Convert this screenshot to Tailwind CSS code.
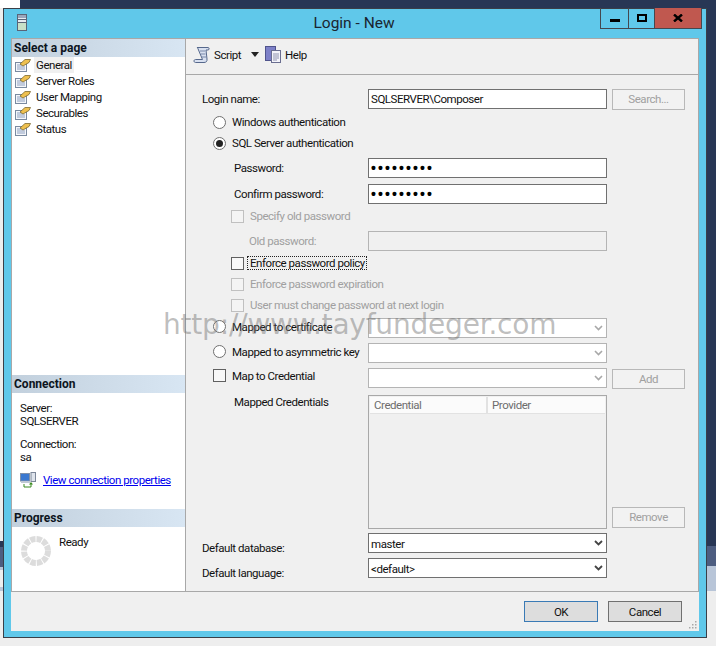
<!DOCTYPE html>
<html>
<head>
<meta charset="utf-8">
<script src="https://cdn.jsdelivr.net/npm/@tailwindcss/browser@4"></script>
</head>
<body class="m-0 p-0 font-['Roboto',sans-serif] text-[11.5px] tracking-[-0.45px] leading-[14px] text-[#111] whitespace-nowrap">
<div class="relative w-[716px] h-[646px] overflow-hidden bg-[#eeeeee]">
  <!-- desktop behind -->
  <div class="absolute left-[21px] top-0 right-0 h-[8px] bg-[#283755]"></div>
  <div class="absolute left-0 top-0 w-[21px] h-[8px] bg-white border-r border-[#283755]"></div>
  <div class="absolute left-[700px] top-0 right-0 h-[546px] bg-[#283755]"></div>
  <div class="absolute left-[700px] top-[546px] right-0 h-[20px] bg-[#4d5d80]"></div>
  <div class="absolute left-[700px] top-[566px] right-0 h-[25px] bg-[#b8c5d8]"></div>
  <div class="absolute left-0 top-[541px] w-[8px] h-[6px] bg-[#283755]"></div>
  <div class="absolute left-0 top-[547px] w-[8px] h-[20px] bg-[#4d5d80]"></div>
  <div class="absolute left-0 top-[567px] w-[8px] h-[3px] bg-[#b8c5d8]"></div>
  <div class="absolute left-0 top-[587px] w-[8px] h-[4px] bg-[#b8c5d8]"></div>

  <!-- window -->
  <div class="absolute left-[3px] top-[8px] w-[704px] h-[630px] bg-[#60c8ea] border border-[#3a3f48] flex flex-col">
    <!-- title bar -->
    <div class="relative h-[29px] shrink-0 flex items-start">
      <svg class="absolute left-[12px] top-[5px]" width="12" height="17" viewBox="0 0 12 17">
        <rect x="1.5" y="0.5" width="9" height="16" fill="#e8ecf2" stroke="#5a6478"/>
        <rect x="2" y="1" width="8" height="3" fill="#9aa6bc"/>
        <line x1="2" y1="5.5" x2="10" y2="5.5" stroke="#5a6478"/>
        <line x1="2" y1="8.5" x2="10" y2="8.5" stroke="#5a6478"/>
        <rect x="2" y="9" width="8" height="7" fill="#c8e0c8"/>
      </svg>
      <div class="w-full text-center text-[15.5px] tracking-normal leading-[20px] pt-[4px] pr-[2px] text-[#1a2530]">Login - New</div>
      <div class="absolute left-[596px] top-[-1px] h-[21px] w-[102px] flex border border-[#44484f] border-t-0">
        <div class="w-[28px] flex items-end justify-center pb-[6px] border-r border-[#44484f]"><div class="w-[10px] h-[3px] bg-black"></div></div>
        <div class="w-[26px] flex items-start justify-center pt-[6px] border-r border-[#44484f]"><div class="w-[10px] h-[8px] border-2 border-black"></div></div>
        <div class="flex-1 bg-[#c0584f] flex items-center justify-center">
          <svg width="10" height="8" viewBox="0 0 10 8"><path d="M1 0.5L9 7.5M9 0.5L1 7.5" stroke="#000" stroke-width="2.4" fill="none"/></svg>
        </div>
      </div>
    </div>
    <!-- client -->
    <div class="ml-[7px] w-[688px] h-[593px] bg-[#f0f0f0] flex flex-col">
      <div class="h-[554px] flex border-t border-[#a8a8a8] shrink-0 border-b">
        <!-- sidebar -->
        <div class="w-[175px] shrink-0 bg-white border-l border-r border-[#a8a8a8] flex flex-col">
          <div class="h-[18px] bg-gradient-to-r from-[#c2d0dd] to-[#d8e6f3] pl-[2px] font-bold text-[12px] tracking-normal leading-[18px] text-[#0c1420]">Select a page</div>
          <div class="h-[318px] flex flex-col">
            <div class="h-[16px] flex items-center pl-[3px] gap-[3px]">
              <svg width="16" height="16" viewBox="0 0 16 16"><rect x="0.5" y="5.5" width="11" height="9" fill="#f4f6fa" stroke="#7a8aa0"/><path d="M2 8h5M2 10h8M2 12h8" stroke="#8ea0c0"/><path d="M5 7L10 2.5h5.5L14 5.5 8 9z" fill="#eec050" stroke="#6e5a20" stroke-width="0.7"/></svg>
              <span class="bg-[#f0f0f0] h-[16px] px-[2px] leading-[16px]">General</span>
            </div>
            <div class="h-[16px] flex items-center pl-[3px] gap-[5px]">
              <svg width="16" height="16" viewBox="0 0 16 16"><rect x="0.5" y="5.5" width="11" height="9" fill="#f4f6fa" stroke="#7a8aa0"/><path d="M2 8h5M2 10h8M2 12h8" stroke="#8ea0c0"/><path d="M5 7L10 2.5h5.5L14 5.5 8 9z" fill="#eec050" stroke="#6e5a20" stroke-width="0.7"/></svg>
              <span>Server Roles</span>
            </div>
            <div class="h-[16px] flex items-center pl-[3px] gap-[5px]">
              <svg width="16" height="16" viewBox="0 0 16 16"><rect x="0.5" y="5.5" width="11" height="9" fill="#f4f6fa" stroke="#7a8aa0"/><path d="M2 8h5M2 10h8M2 12h8" stroke="#8ea0c0"/><path d="M5 7L10 2.5h5.5L14 5.5 8 9z" fill="#eec050" stroke="#6e5a20" stroke-width="0.7"/></svg>
              <span>User Mapping</span>
            </div>
            <div class="h-[16px] flex items-center pl-[3px] gap-[5px]">
              <svg width="16" height="16" viewBox="0 0 16 16"><rect x="0.5" y="5.5" width="11" height="9" fill="#f4f6fa" stroke="#7a8aa0"/><path d="M2 8h5M2 10h8M2 12h8" stroke="#8ea0c0"/><path d="M5 7L10 2.5h5.5L14 5.5 8 9z" fill="#eec050" stroke="#6e5a20" stroke-width="0.7"/></svg>
              <span>Securables</span>
            </div>
            <div class="h-[16px] flex items-center pl-[3px] gap-[5px]">
              <svg width="16" height="16" viewBox="0 0 16 16"><rect x="0.5" y="5.5" width="11" height="9" fill="#f4f6fa" stroke="#7a8aa0"/><path d="M2 8h5M2 10h8M2 12h8" stroke="#8ea0c0"/><path d="M5 7L10 2.5h5.5L14 5.5 8 9z" fill="#eec050" stroke="#6e5a20" stroke-width="0.7"/></svg>
              <span>Status</span>
            </div>
          </div>
          <div class="h-[18px] bg-gradient-to-r from-[#c2d0dd] to-[#d8e6f3] pl-[2px] font-bold text-[12px] tracking-normal leading-[18px] text-[#0c1420]">Connection</div>
          <div class="h-[116px] pl-[8px] pt-[9px] leading-[13px]">
            <div>Server:</div>
            <div>SQLSERVER</div>
            <div class="mt-[10px]">Connection:</div>
            <div>sa</div>
            <div class="mt-[8px] flex items-center gap-[7px]">
              <svg width="16" height="16" viewBox="0 0 16 16"><rect x="0.5" y="1.5" width="9" height="7.5" fill="#3a78d0" stroke="#8090a8"/><rect x="1" y="9" width="9" height="2" fill="#c0c8d4"/><rect x="11" y="0.5" width="4.5" height="9" fill="#dfe4ec" stroke="#7c8798"/><path d="M4 12v3h7v-3" stroke="#3a8a20" fill="none"/><path d="M9 12.5l2-2.5 2 2.5z" fill="#3a8a20"/></svg>
              <span class="text-[#0000ee] underline">View connection properties</span>
            </div>
          </div>
          <div class="h-[18px] bg-gradient-to-r from-[#c2d0dd] to-[#d8e6f3] pl-[2px] font-bold text-[12px] tracking-normal leading-[18px] text-[#0c1420]">Progress</div>
          <div class="h-[64px] flex items-start pl-[9px] pt-[9px] gap-[8px]">
            <svg width="30" height="30" viewBox="0 0 30 30"><circle cx="15" cy="15" r="12" fill="none" stroke="#dcdcdc" stroke-width="6" stroke-dasharray="5.3 1"/></svg>
            <span class="-mt-[1px]">Ready</span>
          </div>
        </div>
        <!-- main -->
        <div class="flex-1 min-w-0 flex flex-col border-r border-[#a8a8a8]">
          <div class="h-[36px] shrink-0 border-b border-[#a8a8a8] flex items-center pl-[7px] pb-[4px] -mr-px">
            <svg width="18" height="18" viewBox="0 0 18 18"><path d="M4 1.5H15C16.5 1.5 16.5 4 15 4H13L14 13C14.3 15.5 13 16.5 11 16.5H2.5C0.5 16.5 0.5 13.5 2.5 13.5H9.5L5.5 4C5 2.5 4.5 1.5 4 1.5Z" fill="#d8e0f0" stroke="#56688c"/><path d="M7 5h5M8 8h4.500M9 11h4" stroke="#7888a8"/></svg>
            <span class="ml-[3px] w-[37px]">Script</span>
            <svg width="8" height="5" viewBox="0 0 8 5"><path d="M0 0h8L4 5z" fill="#222"/></svg>
            <svg class="ml-[6px]" width="16" height="17" viewBox="0 0 16 17"><rect x="0.5" y="0.5" width="10" height="14" fill="#7d80c8" stroke="#50548c"/><rect x="6.5" y="4.5" width="9" height="12" fill="#f4f4fa" stroke="#6a6e90"/><path d="M8 8h6M8 10h6M8 12h6M8 14h4" stroke="#9094b0"/></svg>
            <span class="ml-[4px]">Help</span>
          </div>
          <div class="flex-1 pl-[16px] pt-[14px] flex flex-col">
            <div class="flex items-center h-[20px]">
              <div class="w-[166px]">Login name:</div>
              <div class="w-[239px] h-[20px] bg-white border border-[#707070] pl-[2px] leading-[19px]">SQLSERVER\Composer</div>
              <div class="ml-[5px] w-[73px] h-[21px] border border-[#b8b8b8] bg-[#f2f2f2] text-[#a0a0a0] text-center leading-[19px]">Search...</div>
            </div>
            <div class="flex items-center h-[20px] mt-[3px] pl-[11px] gap-[6px]">
              <div class="w-[13px] h-[13px] rounded-full border border-[#707070] bg-white"></div>
              <span>Windows authentication</span>
            </div>
            <div class="flex items-center h-[20px] mt-[1px] pl-[11px] gap-[6px]">
              <div class="w-[13px] h-[13px] rounded-full border border-[#707070] bg-white flex items-center justify-center"><div class="w-[7px] h-[7px] rounded-full bg-[#222]"></div></div>
              <span>SQL Server authentication</span>
            </div>
            <div class="flex items-center h-[20px] mt-[5px]">
              <div class="w-[166px] pl-[32px]">Password:</div>
              <div class="w-[239px] h-[20px] bg-white border border-[#707070] pl-[2px] leading-[18px] text-[14px] tracking-[2.1px] font-['Liberation_Sans'] font-bold text-black">•••••••••</div>
            </div>
            <div class="flex items-center h-[20px] mt-[6px]">
              <div class="w-[166px] pl-[32px]">Confirm password:</div>
              <div class="w-[239px] h-[20px] bg-white border border-[#707070] pl-[2px] leading-[18px] text-[14px] tracking-[2.1px] font-['Liberation_Sans'] font-bold text-black">•••••••••</div>
            </div>
            <div class="flex items-center h-[14px] mt-[5px] pl-[29px] gap-[6px] text-[#a0a0a0]">
              <div class="w-[13px] h-[13px] border border-[#c0c0c0] bg-[#f4f4f4]"></div>
              <span>Specify old password</span>
            </div>
            <div class="flex items-center h-[20px] mt-[8px]">
              <div class="w-[166px] pl-[47px] text-[#a0a0a0]">Old password:</div>
              <div class="w-[239px] h-[20px] bg-[#f0f0f0] border border-[#b4b4b4]"></div>
            </div>
            <div class="flex items-center h-[14px] mt-[5px] pl-[29px] gap-[3px]">
              <div class="w-[13px] h-[13px] border border-[#606060] bg-[#f8f8f8]"></div>
              <span class="border border-dotted border-[#222] pl-[2px] pr-[1px] leading-[12px] h-[14px]">Enforce password policy</span>
            </div>
            <div class="flex items-center h-[14px] mt-[7px] pl-[29px] gap-[6px] text-[#a0a0a0]">
              <div class="w-[13px] h-[13px] border border-[#c0c0c0] bg-[#f4f4f4]"></div>
              <span>Enforce password expiration</span>
            </div>
            <div class="flex items-center h-[14px] mt-[7px] pl-[29px] gap-[6px] text-[#a0a0a0]">
              <div class="w-[13px] h-[13px] border border-[#c0c0c0] bg-[#f4f4f4]"></div>
              <span>User must change password at next login</span>
            </div>
            <div class="flex items-center h-[20px] mt-[6px]">
              <div class="w-[166px] pl-[11px] pb-[3px] flex items-center gap-[6px]">
                <div class="w-[13px] h-[13px] rounded-full border border-[#707070] bg-white"></div>
                <span>Mapped to certificate</span>
              </div>
              <div class="w-[239px] h-[20px] bg-white border border-[#b4b4b4] flex items-center justify-end pr-[3px]">
                <svg width="9" height="6" viewBox="0 0 9 6"><path d="M1 1l3.5 3.5L8 1" stroke="#a8a8a8" stroke-width="1.6" fill="none"/></svg>
              </div>
            </div>
            <div class="flex items-center h-[20px] mt-[5px]">
              <div class="w-[166px] pl-[11px] pb-[3px] flex items-center gap-[6px]">
                <div class="w-[13px] h-[13px] rounded-full border border-[#707070] bg-white"></div>
                <span>Mapped to asymmetric key</span>
              </div>
              <div class="w-[239px] h-[20px] bg-white border border-[#b4b4b4] flex items-center justify-end pr-[3px]">
                <svg width="9" height="6" viewBox="0 0 9 6"><path d="M1 1l3.5 3.5L8 1" stroke="#a8a8a8" stroke-width="1.6" fill="none"/></svg>
              </div>
            </div>
            <div class="flex items-center h-[20px] mt-[5px]">
              <div class="w-[166px] pl-[11px] pb-[5px] flex items-center gap-[6px]">
                <div class="w-[13px] h-[13px] border border-[#606060] bg-[#f8f8f8]"></div>
                <span>Map to Credential</span>
              </div>
              <div class="w-[239px] h-[20px] bg-white border border-[#b4b4b4] flex items-center justify-end pr-[3px]">
                <svg width="9" height="6" viewBox="0 0 9 6"><path d="M1 1l3.5 3.5L8 1" stroke="#a8a8a8" stroke-width="1.6" fill="none"/></svg>
              </div>
              <div class="ml-[5px] mt-[2px] w-[73px] h-[20px] border border-[#b8b8b8] bg-[#f2f2f2] text-[#a0a0a0] text-center leading-[18px]">Add</div>
            </div>
            <div class="flex items-start h-[134px] mt-[7px]">
              <div class="w-[166px] pl-[32px]">Mapped Credentials</div>
              <div class="w-[239px] h-[134px] border border-[#a8a8a8] bg-[#f0f0f0] p-[1px]">
                <div class="flex h-[17px] bg-[#fbfbfb] border-b border-[#e2e2e2] text-[#6d6d6d]">
                  <div class="w-[118px] pl-[4px] border-r-2 border-[#e2e2e2] leading-[16px]">Credential</div>
                  <div class="pl-[4px] leading-[16px]">Provider</div>
                </div>
              </div>
              <div class="ml-[5px] mt-[112px] w-[73px] h-[21px] border border-[#b8b8b8] bg-[#f2f2f2] text-[#a0a0a0] text-center leading-[19px]">Remove</div>
            </div>
            <div class="flex items-center h-[20px] mt-[4px]">
              <div class="w-[166px] pt-[10px]">Default database:</div>
              <div class="w-[239px] h-[20px] bg-white border border-[#707070] flex items-center justify-between pl-[2px] pr-[3px]">
                <span class="pt-[1px]">master</span>
                <svg width="9" height="6" viewBox="0 0 9 6"><path d="M1 1l3.5 3.5L8 1" stroke="#444" stroke-width="1.8" fill="none"/></svg>
              </div>
            </div>
            <div class="flex items-center h-[20px] mt-[5px]">
              <div class="w-[166px] pt-[10px]">Default language:</div>
              <div class="w-[239px] h-[20px] bg-white border border-[#707070] flex items-center justify-between pl-[2px] pr-[3px]">
                <span class="pt-[1px]">&lt;default&gt;</span>
                <svg width="9" height="6" viewBox="0 0 9 6"><path d="M1 1l3.5 3.5L8 1" stroke="#444" stroke-width="1.8" fill="none"/></svg>
              </div>
            </div>
          </div>
        </div>
      </div>
      <!-- footer -->
      <div class="relative flex-1 flex justify-end gap-[10px] pt-[9px] pr-[17px]">
        <div class="w-[74px] h-[21px] border border-[#3a7ab5] bg-[#dddddd] text-center leading-[20px]">OK</div>
        <div class="w-[74px] h-[21px] border border-[#707070] bg-[#dddddd] text-center leading-[20px]">Cancel</div>
        <svg class="absolute right-[2px] bottom-[2px]" width="8" height="8" viewBox="0 0 8 8" fill="#a8a8a8"><rect x="6" y="0" width="1.5" height="1.5"/><rect x="3" y="3" width="1.5" height="1.5"/><rect x="6" y="3" width="1.5" height="1.5"/><rect x="0" y="6" width="1.5" height="1.5"/><rect x="3" y="6" width="1.5" height="1.5"/><rect x="6" y="6" width="1.5" height="1.5"/></svg>
      </div>
    </div>
  </div>
  <!-- watermark -->
  <div class="absolute left-[163px] top-[307px] font-['DejaVu_Sans'] text-[28px] leading-[36px] tracking-[-0.2px] text-[#6e6e6e]/45 whitespace-nowrap pointer-events-none">http://www.tayfundeger.com</div>
</div>
</body>
</html>
